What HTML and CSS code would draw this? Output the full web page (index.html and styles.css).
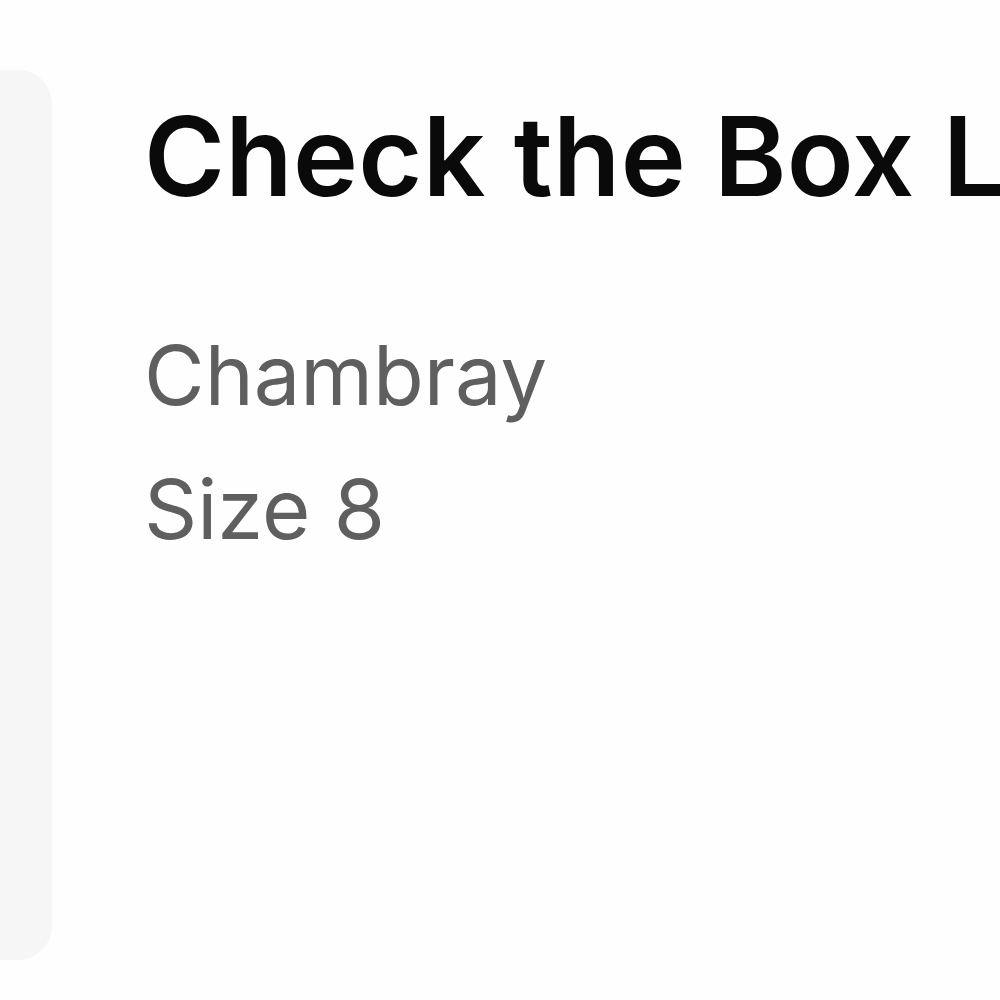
FILE: index.html
```html
<!DOCTYPE html>
<html>
<head>
<meta charset="utf-8">
<link rel="stylesheet" href="styles.css">
</head>
<body>
<div class="row">
  <div class="thumb"></div>
  <div class="info">
    <h1 class="title">Check the Box Leggings</h1>
    <p class="meta">Chambray</p>
    <p class="meta">Size 8</p>
  </div>
</div>
</body>
</html>
```
FILE: styles.css
```css
html, body {
  margin: 0;
  padding: 0;
  background: #fefefe;
  width: 1000px;
  height: 1000px;
  overflow: hidden;
}
.row {
  display: flex;
  gap: 92px;
  padding-top: 70px;
  margin-left: -60px;
}
.thumb {
  width: 112px;
  height: 890px;
  flex: 0 0 112px;
  background: #f6f6f6;
  border-radius: 34px;
}
.info {
  font-family: Inter, "Liberation Sans", sans-serif;
  white-space: nowrap;
  padding-top: 26px;
}
.title {
  margin: 0 0 91px;
  font-size: 110px;
  font-weight: 600;
  color: #0a0a0a;
  line-height: 1.1;
  letter-spacing: 0.3px;
}
.meta {
  margin: 0;
  font-size: 83px;
  font-weight: 400;
  color: #5f5f5f;
  line-height: 1.62;
}
```
